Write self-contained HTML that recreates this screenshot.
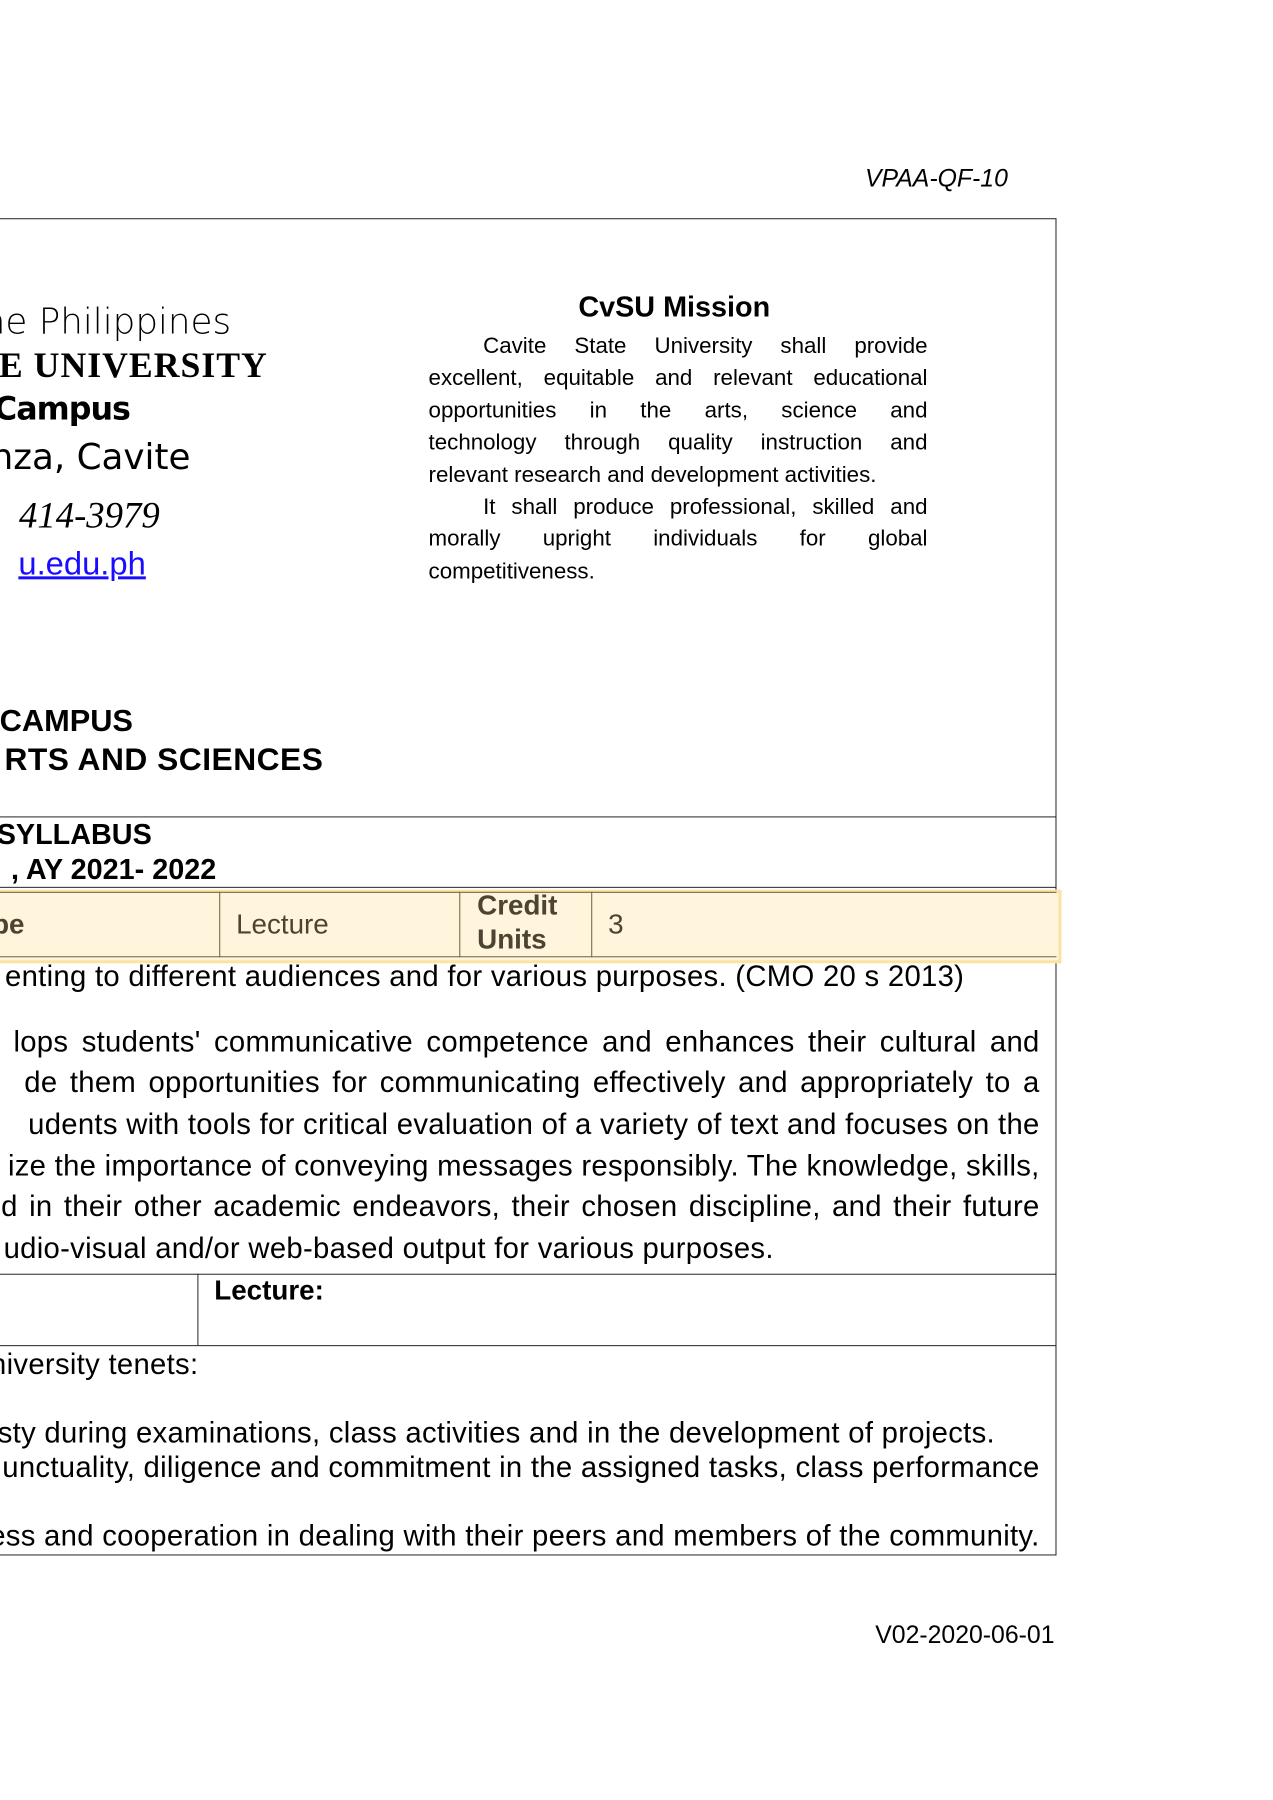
<!DOCTYPE html>
<html><head><meta charset="utf-8"><style>
html,body{margin:0;padding:0;background:#fff;}
body{width:1273px;height:1800px;position:relative;overflow:hidden;font-family:"Liberation Sans",sans-serif;color:#000;}
#w{position:absolute;left:0;top:0;width:1273px;height:1800px;transform:scale(0.992);transform-origin:0 0;}
.a{position:absolute;white-space:nowrap;}
.r{position:absolute;white-space:nowrap;text-align:right;}
.hl{position:absolute;height:0;border-top:1.5px solid #222;}
.vl{position:absolute;width:0;border-left:1.5px solid #222;}
.mis{position:absolute;left:432px;width:503px;font-size:22.5px;line-height:32.4px;}
.mis div{text-align:justify;text-align-last:justify;white-space:nowrap;height:32.4px;}
.mis .i{padding-left:55px;}
.mis .l{text-align-last:left;}
.p{font-size:29.5px;letter-spacing:0.3px;}
</style></head><body><div id="w">
<div class="r" style="right:257px;top:166px;font-size:25px;font-style:italic;">VPAA-QF-10</div>

<div class="hl" style="left:0;width:1065px;top:220px;"></div>
<div class="vl" style="left:1064px;top:220px;height:1348px;"></div>

<div class="r" style="right:1040px;top:304px;font-size:36px;font-family:'DejaVu Sans',sans-serif;font-weight:300;">ne Philippines</div>
<div class="r" style="right:1003px;top:347px;font-size:36px;font-family:'Liberation Serif',serif;font-weight:bold;letter-spacing:1px;">E UNIVERSITY</div>
<div class="r" style="right:1142px;top:393px;font-size:32px;font-family:'DejaVu Sans',sans-serif;font-weight:bold;letter-spacing:-1px;">Campus</div>
<div class="r" style="right:1081px;top:441px;font-size:36px;font-family:'DejaVu Sans',sans-serif;">nza, Cavite</div>
<div class="r" style="right:1112px;top:499px;font-size:37px;font-family:'Liberation Serif',serif;font-style:italic;">414-3979</div>
<div class="r" style="right:1126px;top:549px;font-size:33px;color:#1a0dff;text-decoration:underline;">u.edu.ph</div>

<div class="a" style="left:583px;top:294px;font-size:29px;font-weight:bold;">CvSU Mission</div>
<div class="mis" style="top:333px;">
<div class="i">Cavite State University shall provide</div>
<div>excellent, equitable and relevant educational</div>
<div>opportunities in the arts, science and</div>
<div>technology through quality instruction and</div>
<div class="l">relevant research and development activities.</div>
<div class="i">It shall produce professional, skilled and</div>
<div>morally upright individuals for global</div>
<div class="l">competitiveness.</div>
</div>

<div class="r" style="right:1139px;top:709px;font-size:31px;font-weight:bold;">CAMPUS</div>
<div class="r" style="right:947px;top:747px;font-size:32px;font-weight:bold;letter-spacing:0.5px;">RTS AND SCIENCES</div>

<div class="hl" style="left:0;width:1065px;top:823px;"></div>
<div class="r" style="right:1120px;top:826px;font-size:29px;font-weight:bold;">SYLLABUS</div>
<div class="r" style="right:1055px;top:861px;font-size:29px;font-weight:bold;">, AY 2021- 2022</div>
<div class="hl" style="left:0;width:1065px;top:894px;"></div>

<div class="a" style="left:0;top:897px;width:1067px;height:68px;background:#fff5dc;border:3px solid #fbe3a6;border-left:none;"></div>
<div class="hl" style="left:0;width:1065px;top:899px;border-color:#6a5f3a;"></div>
<div class="hl" style="left:0;width:1065px;top:964px;border-color:#6a5f3a;"></div>
<div class="vl" style="left:221px;top:899px;height:66px;border-color:#6a5f3a;"></div>
<div class="vl" style="left:463px;top:899px;height:66px;border-color:#6a5f3a;"></div>
<div class="vl" style="left:596px;top:899px;height:66px;border-color:#6a5f3a;"></div>
<div class="a" style="left:-8px;top:916px;font-size:28px;font-weight:bold;color:#4a4430;">pe</div>
<div class="a" style="left:238px;top:916px;font-size:28px;color:#4a4430;">Lecture</div>
<div class="a" style="left:481px;top:896px;font-size:28px;font-weight:bold;color:#4a4430;line-height:34px;">Credit<br>Units</div>
<div class="a" style="left:613px;top:916px;font-size:28px;color:#4a4430;">3</div>

<div class="r p" style="right:301px;top:968px;">enting to different audiences and for various purposes. (CMO 20 s 2013)</div>
<div class="r p" style="right:225px;top:1034px;word-spacing:5px;">lops students' communicative competence and enhances their cultural and</div>
<div class="r p" style="right:225px;top:1075px;word-spacing:4px;">de them opportunities for communicating effectively and appropriately to a</div>
<div class="r p" style="right:225px;top:1117px;">udents with tools for critical evaluation of a variety of text and focuses on the</div>
<div class="r p" style="right:225px;top:1159px;">ize the importance of conveying messages responsibly. The knowledge, skills,</div>
<div class="r p" style="right:225px;top:1200px;word-spacing:3px;">d in their other academic endeavors, their chosen discipline, and their future</div>
<div class="r p" style="right:493px;top:1242px;">udio-visual and/or web-based output for various purposes.</div>

<div class="hl" style="left:0;width:1065px;top:1284px;"></div>
<div class="vl" style="left:199px;top:1284px;height:72px;"></div>
<div class="a" style="left:216px;top:1285px;font-size:28px;font-weight:bold;">Lecture:</div>
<div class="hl" style="left:0;width:1065px;top:1356px;"></div>

<div class="r p" style="right:1073px;top:1359px;">niversity tenets:</div>
<div class="r p" style="right:270px;top:1428px;">sty during examinations, class activities and in the development of projects.</div>
<div class="r p" style="right:225px;top:1463px;">unctuality, diligence and commitment in the assigned tasks, class performance</div>
<div class="r p" style="right:225px;top:1532px;">ess and cooperation in dealing with their peers and members of the community.</div>
<div class="hl" style="left:0;width:1065px;top:1567px;"></div>

<div class="r" style="right:210px;top:1634px;font-size:25px;">V02-2020-06-01</div>
</div></body></html>
